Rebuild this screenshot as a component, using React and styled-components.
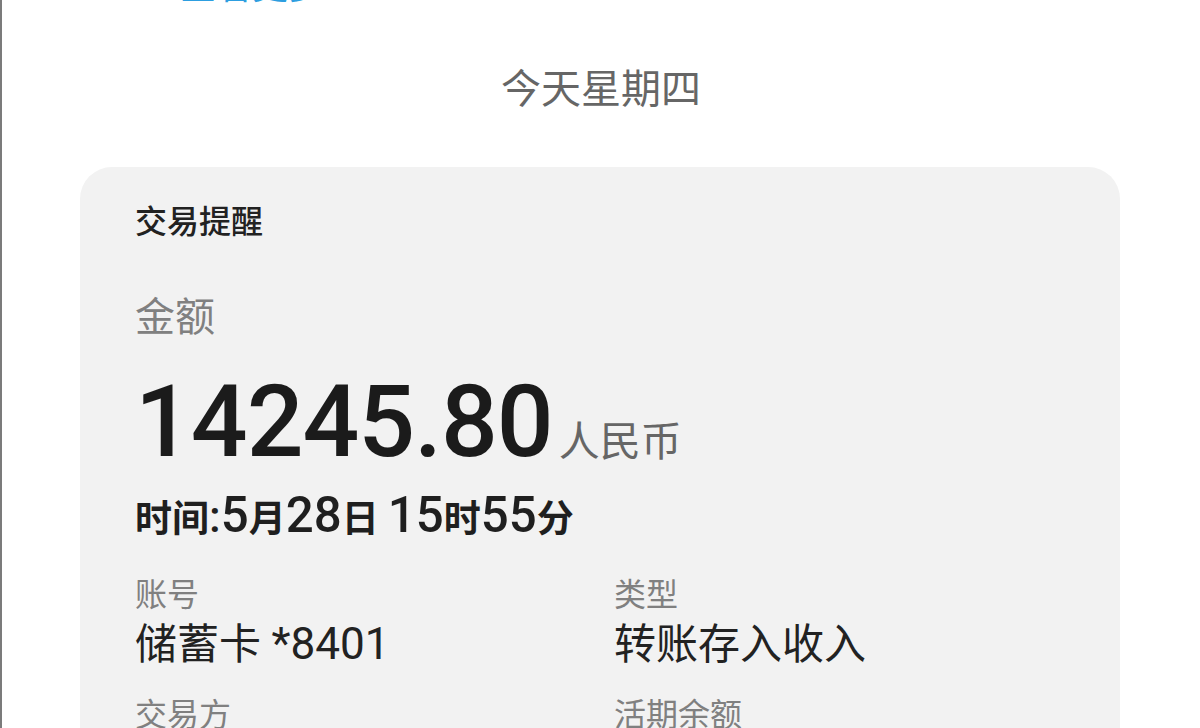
import styled, { createGlobalStyle } from 'styled-components';

const GlobalStyle = createGlobalStyle`
    html, body {
        margin: 0;
        padding: 0;
        background: #ffffff;
    }
    body {
        font-family: "Roboto", "Noto Sans CJK SC", sans-serif;
        overflow: hidden;
    }
`;

const Page = styled.div`
    min-height: 100vh;
    border-left: 2px solid #7b7b7b;
    overflow: hidden;
`;

const TopLink = styled.div`
    margin-top: -33px;
    padding-left: 178px;
    height: 40px;
    font-size: 36px;
    line-height: 40px;
    color: #2d9ee0;
`;

const DayTitle = styled.div`
    margin-top: 58px;
    text-align: center;
    font-size: 40px;
    line-height: 50px;
    color: #666666;
`;

const Card = styled.section`
    margin: 52px 80px 0 78px;
    padding: 35px 55px 40px;
    background: #f2f2f2;
    border-radius: 32px;
`;

const CardTitle = styled.div`
    font-size: 32px;
    line-height: 40px;
    font-weight: 500;
    color: #222222;
`;

const Label = styled.div`
    margin-top: ${p => p.$gap || 0}px;
    font-size: ${p => p.$size || 32}px;
    line-height: ${p => p.$line || 44}px;
    color: #808080;
`;

const AmountRow = styled.div`
    margin-top: 29px;
    display: flex;
    align-items: baseline;
    height: 100px;
    line-height: 100px;
`;

const Amount = styled.span`
    font-family: "Roboto", sans-serif;
    font-size: 100px;
    font-weight: 500;
    color: #1b1b1b;
    letter-spacing: -1px;
`;

const Currency = styled.span`
    margin-left: 6px;
    font-size: 41px;
    color: #666666;
`;

const TimeRow = styled.div`
    margin-top: 23px;
    font-size: 37px;
    line-height: 50px;
    font-weight: 600;
    color: #1f1f1f;
`;

const Num = styled.span`
    font-family: "Roboto", sans-serif;
    font-size: ${p => p.$scale || 1.33}em;
    font-weight: ${p => p.$weight || 'inherit'};
    line-height: 0;
`;

const Details = styled.div`
    margin-top: 28px;
    display: grid;
    grid-template-columns: 479px 1fr;
    row-gap: 20px;
`;

const Field = styled.div`
    display: flex;
    flex-direction: column;
`;

const Value = styled.div`
    font-size: 42px;
    line-height: 56px;
    color: #222222;
`;

export default function App() {
    return (
        <>
            <GlobalStyle />
            <Page>
                <TopLink>查看更多</TopLink>
                <DayTitle>今天星期四</DayTitle>
                <Card>
                    <CardTitle>交易提醒</CardTitle>
                    <Label $gap={51} $size={40} $line={50}>金额</Label>
                    <AmountRow>
                        <Amount>14245.80</Amount>
                        <Currency>人民币</Currency>
                    </AmountRow>
                    <TimeRow>
                        时间<Num $scale={1.2} $weight={500}>:</Num><Num $weight={500}>5</Num>月<Num $weight={500}>28</Num>日 <Num $weight={500}>15</Num>时<Num $weight={500}>55</Num>分
                    </TimeRow>
                    <Details>
                        <Field>
                            <Label>账号</Label>
                            <Value>储蓄卡 <Num $scale={1.05}>*8401</Num></Value>
                        </Field>
                        <Field>
                            <Label>类型</Label>
                            <Value>转账存入收入</Value>
                        </Field>
                        <Field>
                            <Label>交易方</Label>
                        </Field>
                        <Field>
                            <Label>活期余额</Label>
                        </Field>
                    </Details>
                </Card>
            </Page>
        </>
    );
}
